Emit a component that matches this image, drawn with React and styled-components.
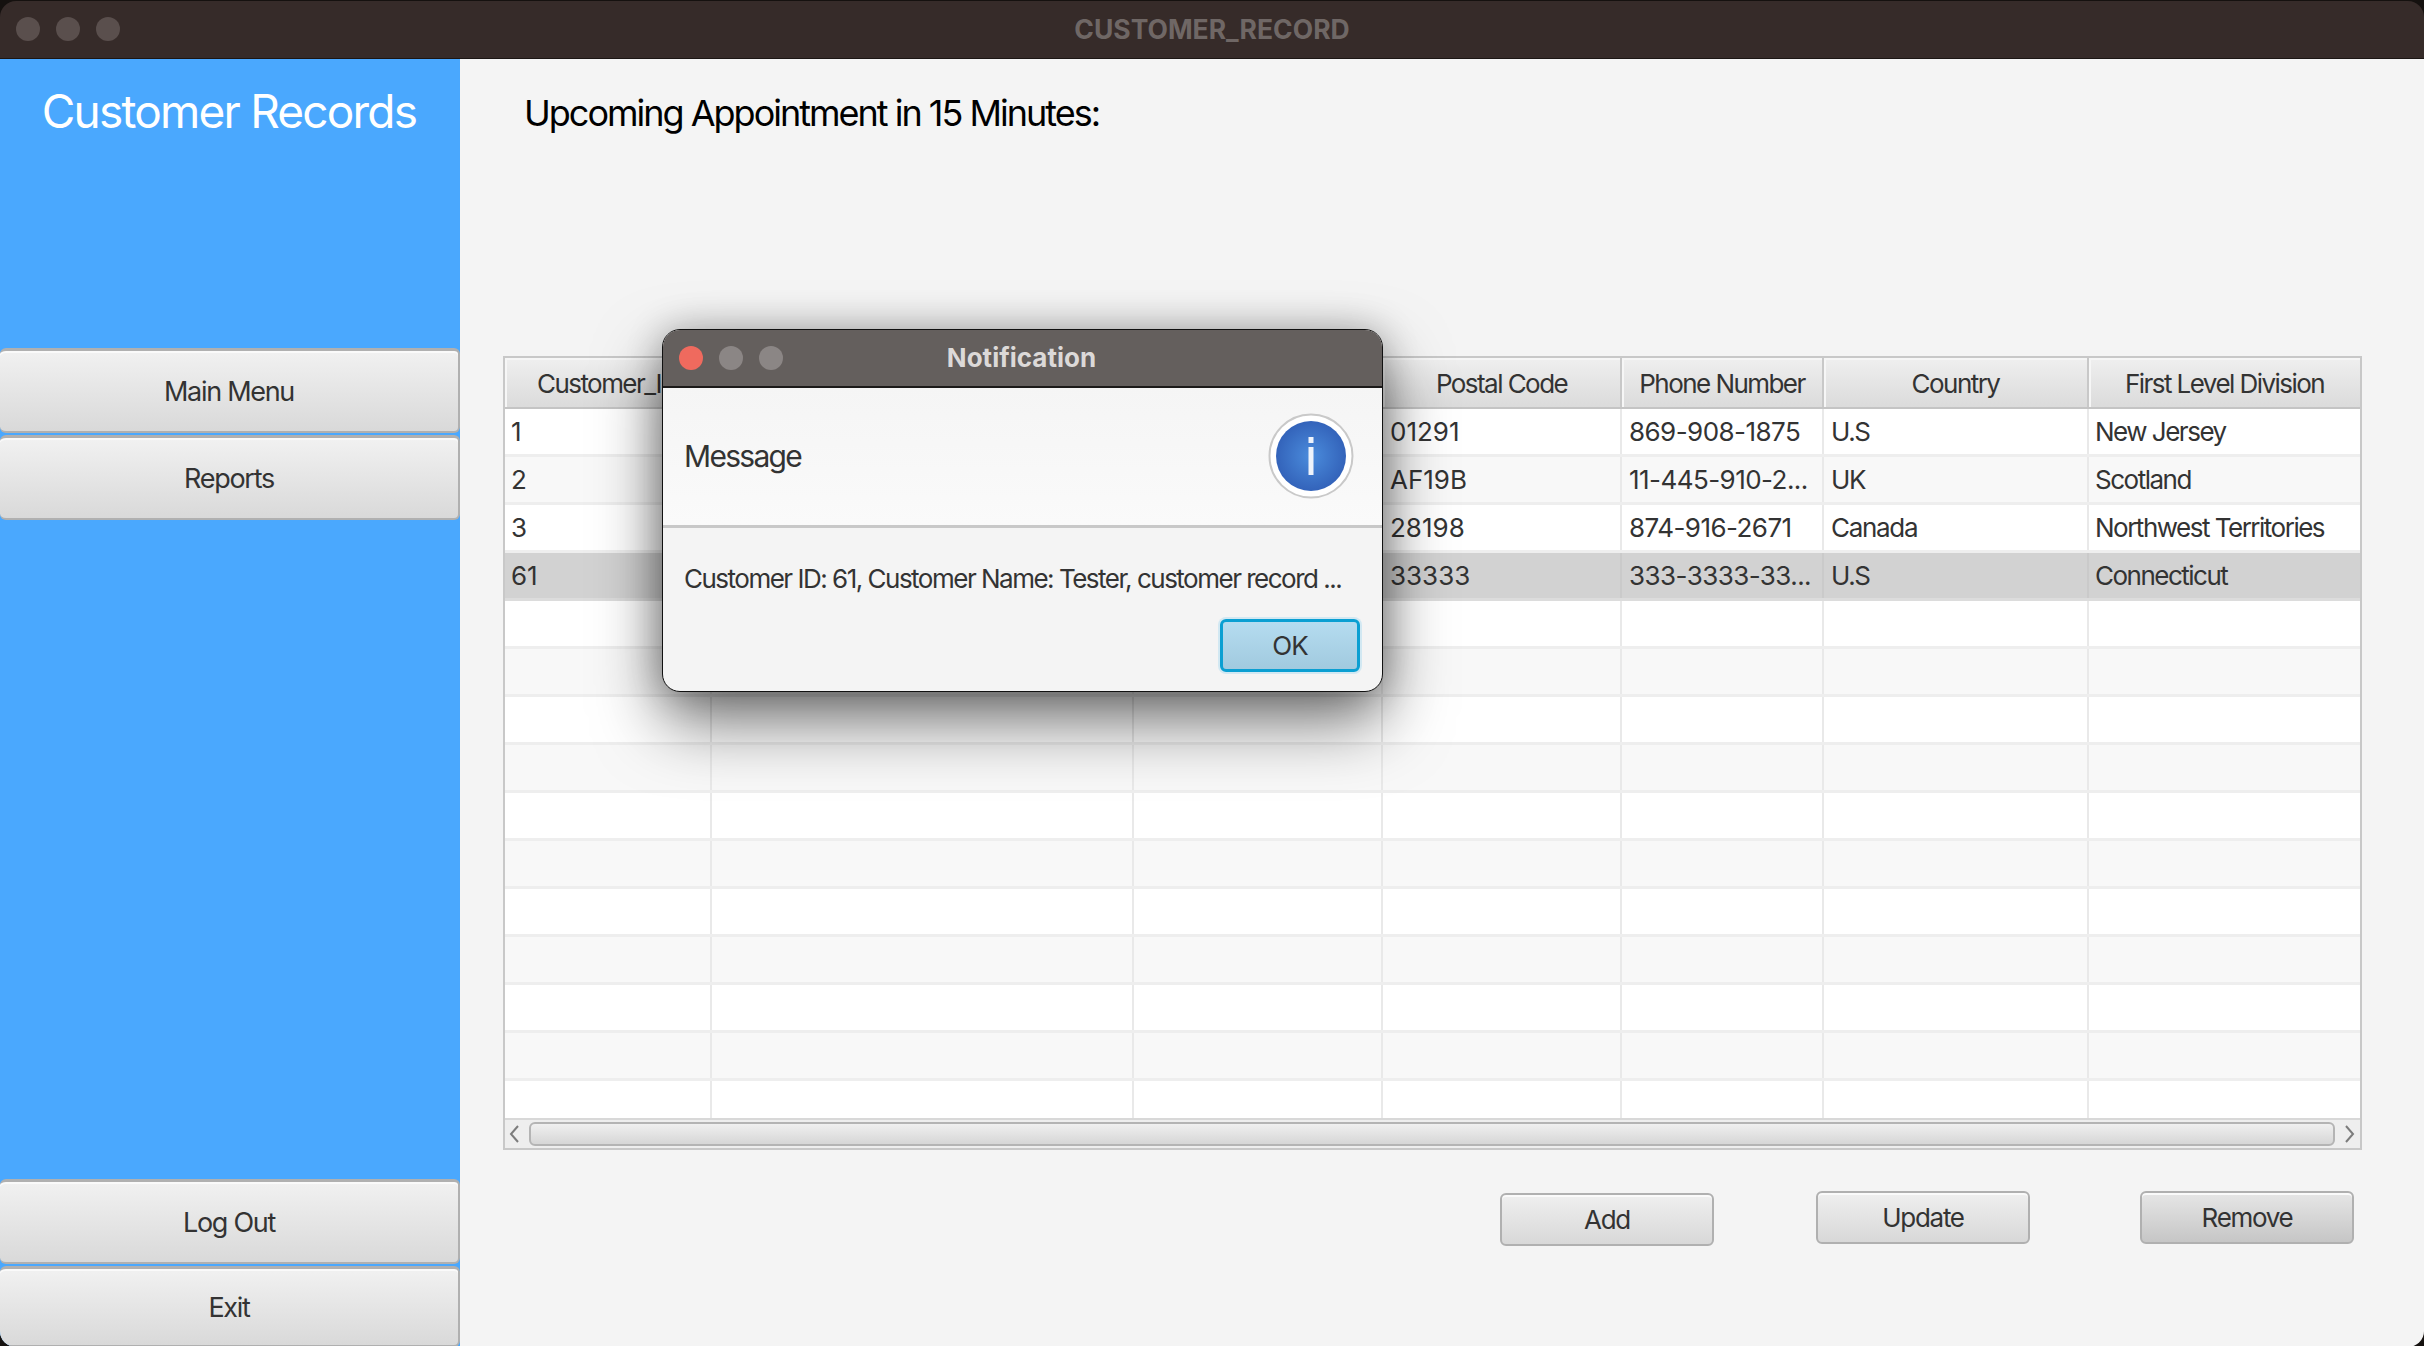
import React from 'react'
import styled, { createGlobalStyle } from 'styled-components'

const GlobalStyle = createGlobalStyle`
  html, body {
    margin: 0;
    padding: 0;
    background: #15110f;
    overflow: hidden;
  }
  * { box-sizing: border-box; }
  body {
    font-family: Inter, "Liberation Sans", sans-serif;
    color: #333;
  }
`

const Window = styled.div`
  position: relative;
  width: 2424px;
  height: 1346px;
  margin-top: 1px;
  border-radius: 16px;
  overflow: hidden;
  display: flex;
  flex-direction: column;
`

const TitleBar = styled.div`
  height: 58px;
  flex: none;
  background: #362b29;
  border-bottom: 1px solid #1c1614;
  display: grid;
  grid-template-columns: 1fr auto 1fr;
  align-items: center;
  padding: 0 16px 2px;
`

const Dots = styled.div`
  display: flex;
  gap: 16px;
`

const Dot = styled.span`
  width: 24px;
  height: 24px;
  border-radius: 50%;
  background: ${p => p.$color};
`

const WindowTitle = styled.div`
  font-size: 26.5px;
  font-weight: 700;
  color: #6f6765;
`

const Body = styled.div`
  flex: 1;
  min-height: 0;
  display: flex;
  background: #f4f4f4;
`

const Sidebar = styled.aside`
  width: 460px;
  flex: none;
  background: #4aa8fe;
  display: flex;
  flex-direction: column;
  gap: 2px;
`

const Brand = styled.div`
  height: 287px;
  flex: none;
  padding: 23px 2px 0 0;
  text-align: center;
  font-size: 46px;
  line-height: 58px;
  letter-spacing: -1.8px;
  color: #fff;
`

const Spacer = styled.div`
  flex: 1;
`

const SideButton = styled.button`
  width: 100%;
  height: ${p => p.$height || 85}px;
  flex: none;
  padding: 0;
  font: inherit;
  font-size: 27px;
  letter-spacing: -1.3px;
  color: #333;
  border: 2px solid #b0b0b0;
  border-top-width: 3px;
  border-left: none;
  border-radius: 6px;
  background: linear-gradient(#f1f1f1, #d9d9d9);
  box-shadow: inset 0 2px 0 #fafafa;
`

const Main = styled.main`
  flex: 1;
  min-width: 0;
  display: flex;
  flex-direction: column;
  padding: 0 62px 0 43px;
`

const Heading = styled.h1`
  margin: 0 0 0 21px;
  height: 297px;
  flex: none;
  padding-top: 32px;
  font-size: 36px;
  font-weight: 400;
  line-height: 44px;
  letter-spacing: -2px;
  color: #000;
`

const Table = styled.div`
  width: 1859px;
  height: 794px;
  flex: none;
  border: 2px solid #c8c8c8;
  display: flex;
  flex-direction: column;
  background: #fff;
`

const columns = '207px 422px 249px 239px 202px 265px 271px'

const HeaderRow = styled.div`
  height: 51px;
  flex: none;
  display: grid;
  grid-template-columns: ${columns};
  border-bottom: 2px solid #c4c4c4;
`

const HeaderCell = styled.div`
  display: flex;
  align-items: center;
  justify-content: center;
  padding-top: 2px;
  font-size: 26px;
  letter-spacing: -1.55px;
  color: #333;
  background: linear-gradient(#efefef, #dbdbdb);
  border-right: 2px solid #c8c8c8;
  box-shadow: inset 2px 2px 0 #f6f6f6;
  white-space: nowrap;
  overflow: hidden;
  &:last-child { border-right: none; }
`

const Rows = styled.div`
  flex: 1;
  min-height: 0;
  overflow: hidden;
`

const Row = styled.div`
  height: 48px;
  display: grid;
  grid-template-columns: ${columns};
  background: ${p => (p.$selected ? '#d2d2d2' : p.$alt ? '#f8f8f8' : '#fff')};
  border-bottom: 3px solid ${p => (p.$selected ? '#dcdcdc' : '#eeeeee')};
`

const Cell = styled.div`
  display: flex;
  align-items: center;
  padding-left: ${p => p.$pad}px;
  font-size: 26px;
  letter-spacing: ${p => p.$spacing}px;
  color: #333;
  white-space: nowrap;
  overflow: hidden;
  border-right: 2px solid ${p => (p.$selected ? '#cacaca' : '#e9e9e9')};
  &:last-child { border-right: none; }
`

const ScrollBar = styled.div`
  height: 30px;
  flex: none;
  display: flex;
  align-items: center;
  background: #eeeeee;
  border-top: 2px solid #d8d8d8;
  padding: 0 4px 0 3px;
  gap: 9px;
`

const Arrow = styled.svg`
  width: 12px;
  height: 20px;
  flex: none;
`

const Thumb = styled.div`
  flex: 1;
  height: 24px;
  border: 2px solid #b4b4b4;
  border-radius: 6px;
  background: linear-gradient(#f0f0f0, #d6d6d6);
`

const Actions = styled.div`
  display: flex;
  align-items: flex-start;
  padding: 41px 8px 0 0;
  justify-content: flex-end;
`

const ActionButton = styled.button`
  width: 214px;
  height: 53px;
  margin-left: ${p => p.$gap}px;
  margin-top: ${p => p.$drop || 0}px;
  padding: 0;
  font: inherit;
  font-size: 26px;
  letter-spacing: -1.3px;
  color: #333;
  border: 2px solid #b0b0b0;
  border-radius: 6px;
  background: ${p => (p.$hover ? 'linear-gradient(#e6e6e6, #c6c6c6)' : 'linear-gradient(#efefef, #d8d8d8)')};
  box-shadow: inset 0 2px 0 #fafafa;
`

const Dialog = styled.div`
  position: absolute;
  left: 662px;
  top: 328px;
  width: 721px;
  height: 363px;
  display: flex;
  flex-direction: column;
  background: #f4f4f4;
  border: 1px solid #111;
  border-radius: 18px;
  overflow: hidden;
  box-shadow: 0 30px 66px rgba(0, 0, 0, 0.55), 0 0 36px rgba(0, 0, 0, 0.24);
`

const DialogTitle = styled.div`
  height: 58px;
  flex: none;
  display: grid;
  grid-template-columns: 1fr auto 1fr;
  align-items: center;
  padding: 0 16px;
  background: #645f5d;
  border-bottom: 2px solid #1c1a19;
  font-size: 26px;
  font-weight: 700;
  color: #dcd9d8;
`

const DialogTitleText = styled.span`
  margin: -2px 0 0 -2px;
`

const DialogHeader = styled.div`
  height: 140px;
  flex: none;
  display: flex;
  align-items: center;
  justify-content: space-between;
  padding: 0 28px 2px 21px;
  background: linear-gradient(#f5f5f5, #fafafa);
  border-bottom: 3px solid #c8c8c8;
  font-size: 30px;
  letter-spacing: -1.7px;
  color: #333;
`

const DialogText = styled.div`
  padding: 34px 0 0 21px;
  font-size: 26px;
  line-height: 34px;
  letter-spacing: -1.5px;
  color: #333;
  white-space: nowrap;
`

const DialogActions = styled.div`
  display: flex;
  justify-content: flex-end;
  padding: 23px 22px 0 0;
`

const OkButton = styled.button`
  width: 140px;
  height: 53px;
  padding: 0;
  font: inherit;
  font-size: 26px;
  letter-spacing: -0.8px;
  color: #333;
  border: 3px solid #0b9fd2;
  border-radius: 6px;
  background: linear-gradient(#b5dcf0, #a1cadf);
  box-shadow: 0 0 0 2px rgba(160, 215, 240, 0.4);
`

const customers = [
  ['1', '01291', '869-908-1875', 'U.S', 'New Jersey'],
  ['2', 'AF19B', '11-445-910-2...', 'UK', 'Scotland'],
  ['3', '28198', '874-916-2671', 'Canada', 'Northwest Territories'],
  ['61', '33333', '333-3333-33...', 'U.S', 'Connecticut'],
]

const headers = ['Customer_ID', '', '', 'Postal Code', 'Phone Number', 'Country', 'First Level Division']

// digits in Inter already sit close to the reference, letters need more tightening
const cellSpacing = [-0.2, 0, 0, 0, -0.55, -1.3, -1.5]
const cellPadding = [6, 7, 7, 7, 7, 7, 6]

function InfoIcon() {
  return (
    <svg width="86" height="86" viewBox="0 0 86 86">
      <defs>
        <radialGradient id="infoFill" cx="50%" cy="50%" r="50%">
          <stop offset="0%" stopColor="#4b8cdc" />
          <stop offset="100%" stopColor="#3363ba" />
        </radialGradient>
      </defs>
      <circle cx="43" cy="43" r="41.5" fill="#fff" stroke="#c9c9c9" strokeWidth="2" />
      <circle cx="43" cy="43" r="35" fill="url(#infoFill)" />
      <rect x="40.5" y="24" width="5" height="6" fill="#eef3fb" />
      <rect x="40.5" y="34" width="5" height="28" fill="#eef3fb" />
    </svg>
  )
}

function App() {
  const rows = Array.from({ length: 15 }, (_, i) => customers[i] || null)

  return (
    <>
      <GlobalStyle />
      <Window>
        <TitleBar>
          <Dots>
            <Dot $color="#5a4f4d" />
            <Dot $color="#5a4f4d" />
            <Dot $color="#5a4f4d" />
          </Dots>
          <WindowTitle>CUSTOMER_RECORD</WindowTitle>
        </TitleBar>
        <Body>
          <Sidebar>
            <Brand>Customer Records</Brand>
            <SideButton>Main Menu</SideButton>
            <SideButton>Reports</SideButton>
            <Spacer />
            <SideButton>Log Out</SideButton>
            <SideButton $height={81}>Exit</SideButton>
          </Sidebar>
          <Main>
            <Heading>Upcoming Appointment in 15 Minutes:</Heading>
            <Table>
              <HeaderRow>
                {headers.map((h, i) => <HeaderCell key={i}>{h}</HeaderCell>)}
              </HeaderRow>
              <Rows>
                {rows.map((r, i) => {
                  const selected = i === 3
                  const cells = r ? [r[0], '', '', r[1], r[2], r[3], r[4]] : ['', '', '', '', '', '', '']
                  return (
                    <Row key={i} $alt={i % 2 === 1} $selected={selected}>
                      {cells.map((c, j) => (
                        <Cell key={j} $selected={selected} $spacing={cellSpacing[j]} $pad={cellPadding[j]}>{c}</Cell>
                      ))}
                    </Row>
                  )
                })}
              </Rows>
              <ScrollBar>
                <Arrow viewBox="0 0 12 20">
                  <path d="M10 2 L3 10 L10 18" fill="none" stroke="#7c7c7c" strokeWidth="2" />
                </Arrow>
                <Thumb />
                <Arrow viewBox="0 0 12 20">
                  <path d="M2 2 L9 10 L2 18" fill="none" stroke="#7c7c7c" strokeWidth="2" />
                </Arrow>
              </ScrollBar>
            </Table>
            <Actions>
              <ActionButton $gap={0} $drop={2}>Add</ActionButton>
              <ActionButton $gap={102}>Update</ActionButton>
              <ActionButton $gap={110} $hover>Remove</ActionButton>
            </Actions>
          </Main>
        </Body>
        <Dialog>
          <DialogTitle>
            <Dots>
              <Dot $color="#ef6a5e" />
              <Dot $color="#8b8685" />
              <Dot $color="#8b8685" />
            </Dots>
            <DialogTitleText>Notification</DialogTitleText>
          </DialogTitle>
          <DialogHeader>
            <span>Message</span>
            <InfoIcon />
          </DialogHeader>
          <DialogText>Customer ID: 61, Customer Name: Tester, customer record ...</DialogText>
          <DialogActions>
            <OkButton>OK</OkButton>
          </DialogActions>
        </Dialog>
      </Window>
    </>
  )
}

export default App
